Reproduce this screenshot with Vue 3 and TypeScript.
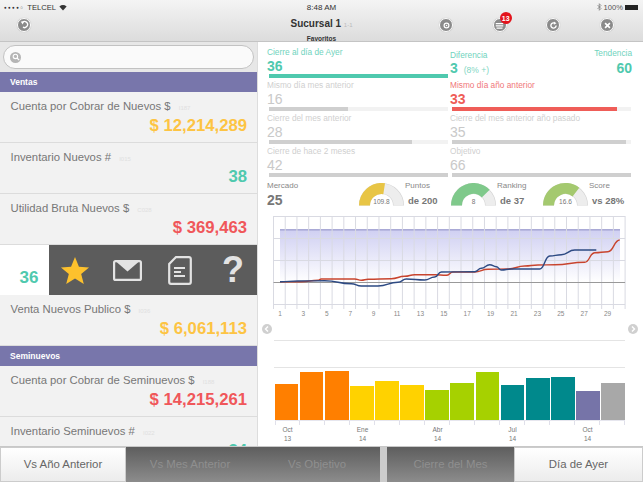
<script setup lang="ts">
interface Row { t: string; c: string; v: string; col: string }
const ventas1: Row[] = [
  { t: 'Cuenta por Cobrar de Nuevos $', c: 'I187', v: '$ 12,214,289', col: '#fdc443' },
  { t: 'Inventario Nuevos #', c: 'I015', v: '38', col: '#4fc9ae' },
  { t: 'Utilidad Bruta Nuevos $', c: 'C028', v: '$ 369,463', col: '#f0575a' },
]
const semi: Row[] = [
  { t: 'Cuenta por Cobrar de Seminuevos $', c: 'I188', v: '$ 14,215,261', col: '#f0575a' },
  { t: 'Inventario Seminuevos #', c: 'I022', v: '34', col: '#4fc9ae' },
]
const metrics = [
  { l: 'Mismo día mes anterior', v: '16', w: 44, kind: 'g' },
  { l: 'Mismo día año anterior', v: '33', w: 92, kind: 'r' },
  { l: 'Cierre del mes anterior', v: '28', w: 80, kind: 'g' },
  { l: 'Cierre del mes anterior año pasado', v: '35', w: 97, kind: 'g' },
  { l: 'Cierre de hace 2 meses', v: '42', w: 100, kind: 'g' },
  { l: 'Objetivo', v: '66', w: 100, kind: 'g' },
]
const gauges = [
  { name: 'Puntos', val: '109.8', of: 'de 200', col: '#e8c545', frac: 0.55 },
  { name: 'Ranking', val: '8', of: 'de 37', col: '#7fc98b', frac: 0.755 },
  { name: 'Score', val: '16.6', of: 'vs 28%', col: '#a4c96f', frac: 0.71 },
]
function arc(frac: number): string {
  const a = Math.PI * (1 - frac)
  const r = 17
  return `M5.5 22.5 A${r} ${r} 0 0 1 ${(22.5 + r * Math.cos(a)).toFixed(2)} ${(22.5 - r * Math.sin(a)).toFixed(2)}`
}
const bars = [
  { h: 36, c: '#ff7f00' }, { h: 48, c: '#ff7f00' }, { h: 49, c: '#ff7f00' }, { h: 34, c: '#ffd200' },
  { h: 39, c: '#ffd200' }, { h: 35, c: '#ffd200' }, { h: 30, c: '#a6d100' }, { h: 37, c: '#a6d100' },
  { h: 48, c: '#a6d100' }, { h: 35, c: '#00898c' }, { h: 42, c: '#00898c' }, { h: 43, c: '#00898c' },
  { h: 29, c: '#7674a8' }, { h: 37, c: '#a8a8a8' },
]
const barLabels = [
  { a: 'Oct', b: '13' }, { a: 'Ene', b: '14' }, { a: 'Abr', b: '14' }, { a: 'Jul', b: '14' }, { a: 'Oct', b: '14' },
]
const days = [1, 3, 5, 7, 9, 11, 13, 15, 17, 19, 21, 23, 25, 27, 29]
const vgrid = Array.from({ length: 31 }, (_, i) => 15.5 + i * 11.72)

// Points read from the reference at 3x, relative to the chart's corner.
function smooth(pts: number[][]): string {
  const p = pts.map(([x, y]) => [x / 3, y / 3 - 9])
  let d = `M${p[0][0].toFixed(1)} ${p[0][1].toFixed(1)}`
  for (let i = 1; i < p.length; i++) {
    const dx = (p[i][0] - p[i - 1][0]) / 2
    d += ` C${(p[i - 1][0] + dx).toFixed(1)} ${p[i - 1][1].toFixed(1)} ${(p[i][0] - dx).toFixed(1)} ${p[i][1].toFixed(1)} ${p[i][0].toFixed(1)} ${p[i][1].toFixed(1)}`
  }
  return d
}
const redLine = smooth([[66, 230], [130, 230], [180, 226], [190, 222], [290, 222], [310, 226], [330, 223], [400, 221], [440, 214], [470, 209], [530, 209], [565, 211], [585, 201], [650, 201], [690, 193], [750, 192], [800, 183], [840, 180], [890, 179], [980, 172], [1010, 143], [1050, 140], [1085, 105]])
const blueLine = smooth([[66, 230], [120, 228], [200, 227], [280, 236], [310, 243], [360, 243], [420, 232], [445, 222], [500, 225], [530, 216], [550, 201], [650, 200], [670, 190], [695, 179], [715, 185], [730, 195], [760, 192], [845, 192], [875, 153], [910, 149], [950, 135], [1015, 135]])
</script>

<template>
  <div class="app">
    <header class="top">
      <div class="status">
        <span class="carrier"><span class="dots">●●●●○</span> TELCEL
          <svg width="8" height="7" viewBox="0 0 11 9"><path d="M5.5 8.5 L0.5 3 Q5.5 -1 10.5 3 Z" fill="#333" /></svg>
        </span>
        <span class="clock">8:48 AM</span>
        <span class="right-status">
          <svg width="5" height="8" viewBox="0 0 5 8"><path d="M0.5 2 L4 5.5 L2.3 7.3 V0.7 L4 2.5 L0.5 6" fill="none" stroke="#777" stroke-width="0.7" /></svg>
          100%
          <span class="batt"></span>
        </span>
      </div>
      <div class="nav">
        <span class="round back"><svg width="12" height="12" viewBox="0 0 12 12"><path d="M3 3.5 A4 4 0 1 1 4 9.5" fill="none" stroke="#fff" stroke-width="1.8" /><path d="M1 2 L5.5 2 L3.5 6 Z" fill="#fff" /></svg></span>
        <div class="title">
          <div class="t1">Sucursal 1 <small>1-1</small></div>
          <div class="t2">Favoritos</div>
        </div>
        <div class="actions">
          <span class="round"><svg width="12" height="12" viewBox="0 0 12 12"><circle cx="6" cy="6" r="3.2" fill="none" stroke="#fff" stroke-width="1.6" /><circle cx="6" cy="6" r="1" fill="#fff" /></svg></span>
          <span class="round list">
            <svg width="12" height="12" viewBox="0 0 12 12"><path d="M1 3.5h10M1 6.5h10M2 9.5h8" stroke="#fff" stroke-width="1.6" /></svg>
            <span class="badge">13</span>
          </span>
          <span class="round"><svg width="12" height="12" viewBox="0 0 12 12"><path d="M9.5 6 A3.5 3.5 0 1 1 7.5 2.8" fill="none" stroke="#fff" stroke-width="1.8" /><path d="M6.5 0.8 L10 3 L6.5 5 Z" fill="#fff" /></svg></span>
          <span class="round"><svg width="12" height="12" viewBox="0 0 12 12"><path d="M2.8 2.8 L9.2 9.2 M9.2 2.8 L2.8 9.2" stroke="#fff" stroke-width="2.2" /></svg></span>
        </div>
      </div>
    </header>

    <div class="main">
      <aside class="side">
        <div class="searchwrap">
          <div class="search">
            <span class="mag"><svg width="8" height="8" viewBox="0 0 8 8"><circle cx="3.4" cy="3.4" r="2.2" fill="none" stroke="#fff" stroke-width="1.1" /><path d="M5 5 L7.2 7.2" stroke="#fff" stroke-width="1.2" /></svg></span>
          </div>
        </div>
        <div class="sec">Ventas</div>
        <div v-for="r in ventas1" :key="r.c" class="row">
          <div class="rt">{{ r.t }} <small>{{ r.c }}</small></div>
          <div class="rv" :style="{ color: r.col }">{{ r.v }}</div>
        </div>
        <div class="swipe">
          <div class="swipe-val"><span>36</span></div>
          <div class="swipe-btns">
            <svg class="star" width="30" height="29" viewBox="0 0 32 31"><path d="M16 1 L20.2 11.6 L31 12.2 L22.6 19.2 L25.4 30 L16 24 L6.6 30 L9.4 19.2 L1 12.2 L11.8 11.6 Z" fill="#fdc12d" /></svg>
            <svg class="env" width="29" height="21" viewBox="0 0 29 21"><rect x="1.1" y="1.1" width="26.8" height="18.8" rx="1.5" fill="none" stroke="#e3e3e3" stroke-width="2.2" /><path d="M3.5 2 L14.5 11.5 L25.5 2 Z" fill="#e3e3e3" /></svg>
            <svg class="doc" width="24" height="29" viewBox="0 0 24 29"><path d="M8 1.1 H21 a1.8 1.8 0 0 1 1.8 1.8 V26 a1.8 1.8 0 0 1 -1.8 1.8 H3 a1.8 1.8 0 0 1 -1.8 -1.8 V8 Z" fill="none" stroke="#e3e3e3" stroke-width="2.2" /><path d="M6 12h11M6 16h7M6 20h11" stroke="#e3e3e3" stroke-width="2" /></svg>
            <span class="q">?</span>
          </div>
        </div>
        <div class="row">
          <div class="rt">Venta Nuevos Publico $ <small>I036</small></div>
          <div class="rv yellow">$ 6,061,113</div>
        </div>
        <div class="sec">Seminuevos</div>
        <div v-for="r in semi" :key="r.c" class="row">
          <div class="rt">{{ r.t }} <small>{{ r.c }}</small></div>
          <div class="rv" :style="{ color: r.col }">{{ r.v }}</div>
        </div>
      </aside>

      <section class="detail">
        <div class="metrics">
          <div class="m">
            <div class="ml teal">Cierre al día de Ayer</div>
            <div class="mv teal2">36</div>
            <div class="bar"><i class="tealbar full"></i></div>
          </div>
          <div class="m diff">
            <div>
              <div class="ml teal dl">Diferencia</div>
              <div class="mv teal2 dv">3 <small>(8% +)</small></div>
            </div>
            <div class="tend">
              <div class="ml teal tl">Tendencia</div>
              <div class="mv teal2 tv">60</div>
            </div>
          </div>
          <div v-for="m in metrics" :key="m.l" class="m">
            <div class="ml" :class="{ red: m.kind === 'r' }">{{ m.l }}</div>
            <div class="mv" :class="{ red2: m.kind === 'r' }">{{ m.v }}</div>
            <div class="bar"><i :class="m.kind === 'r' ? 'redbar' : 'greybar'" :style="{ width: m.w + '%' }"></i></div>
          </div>
        </div>

        <div class="gauges">
          <div class="merc">
            <div class="gl">Mercado</div>
            <div class="gv">25</div>
          </div>
          <div v-for="g in gauges" :key="g.name" class="g">
            <svg class="gsvg" width="45" height="23" viewBox="0 0 45 23">
              <path d="M5.5 22.5 A17 17 0 0 1 39.5 22.5" fill="none" stroke="#d4d4d4" stroke-width="11" />
              <path d="M5.5 22.5 A17 17 0 0 1 39.5 22.5" fill="none" stroke="#ededed" stroke-width="9.8" />
              <path :d="arc(g.frac)" fill="none" :stroke="g.col" stroke-width="11" />
              <text x="22.5" y="21" text-anchor="middle" class="gtxt">{{ g.val }}</text>
            </svg>
            <div class="gside">
              <div class="gl">{{ g.name }}</div>
              <div class="gof">{{ g.of }}</div>
            </div>
          </div>
        </div>

        <div class="chart">
          <svg width="385" height="106" viewBox="0 0 385 106">
            <defs>
              <linearGradient id="band" x1="0" y1="0" x2="0" y2="1">
                <stop offset="0" stop-color="#cfcff2" />
                <stop offset="1" stop-color="#ffffff" />
              </linearGradient>
            </defs>
            <rect x="22" y="15.3" width="340" height="52.7" fill="url(#band)" />
            <rect x="22" y="15" width="340" height="1.6" fill="#aaaad6" />
            <line v-for="(x, i) in vgrid" :key="i" :x1="x" :x2="x" y1="2" y2="95" stroke="#d9dae2" stroke-width="1" />
            <path d="M15.5 2.5h351.6M15.5 24.5h351.6M15.5 46.5h351.6M15.5 90.5h351.6" stroke="#d9dae2" fill="none" />
            <path d="M15.5 68.5h351.6" stroke="#999" stroke-width="1" />
            <path :d="redLine" fill="none" stroke="#c8442e" stroke-width="1.4" />
            <path :d="blueLine" fill="none" stroke="#2d4a83" stroke-width="1.4" />
            <text v-for="(d, i) in days" :key="d" :x="22 + i * 23.4" y="102" text-anchor="middle" class="ax">{{ d }}</text>
          </svg>
        </div>
        <div class="arrows">
          <span class="arr"><svg width="10" height="10" viewBox="0 0 10 10"><path d="M6 2.5 L3.5 5 L6 7.5" fill="none" stroke="#fff" stroke-width="1.4" /></svg></span>
          <span class="arr"><svg width="10" height="10" viewBox="0 0 10 10"><path d="M4 2.5 L6.5 5 L4 7.5" fill="none" stroke="#fff" stroke-width="1.4" /></svg></span>
        </div>

        <div class="barsec">
          <div class="gridline one"></div>
          <div class="gridline two"></div>
          <div class="bars">
            <div v-for="(b, i) in bars" :key="i" class="bcol">
              <i :style="{ height: b.h + 'px', background: b.c }"></i>
            </div>
          </div>
          <div class="ticks">
            <span v-for="(b, i) in bars" :key="i"></span>
          </div>
          <div class="blabels">
            <div v-for="(l, i) in barLabels" :key="i" class="bl">
              <span>{{ l.a }}</span><span>{{ l.b }}</span>
            </div>
          </div>
        </div>
      </section>
    </div>

    <nav class="tabs">
      <div class="tab on a">Vs Año Anterior</div>
      <div class="tab off b">Vs Mes Anterior</div>
      <div class="tab off c">Vs Objetivo</div>
      <div class="sep"></div>
      <div class="tab off d">Cierre del Mes</div>
      <div class="tab on e">Día de Ayer</div>
    </nav>
  </div>
</template>

<style>
html, body { margin: 0; background: #fff; overflow: hidden; }
</style>

<style scoped>
.app { width: 643px; height: 482px; display: flex; flex-direction: column; font-family: "Liberation Sans", Arial, sans-serif; overflow: hidden; background: #fff; position: relative; }
.top { height: 42px; flex: none; box-sizing: border-box; background: linear-gradient(#f4f4f4, #dcdcdc); border-bottom: 1px solid #c4c4c4; display: flex; flex-direction: column; }
.status { height: 14px; display: flex; align-items: center; justify-content: space-between; padding: 0 5px 0 4px; font-size: 7.6px; color: #333; position: relative; }
.carrier { display: flex; align-items: center; gap: 3px; }
.dots { font-size: 4.4px; letter-spacing: 1.4px; }
.clock { position: absolute; left: 0; right: 0; text-align: center; font-size: 8px; }
.right-status { display: flex; align-items: center; gap: 2px; color: #555; }
.batt { width: 13px; height: 5px; background: #222; display: inline-block; }
.nav { flex: 1; display: flex; align-items: center; position: relative; padding: 0 0 6px 17px; }
.round { width: 12px; height: 12px; border-radius: 50%; background: #8a8a8a; border: 1px solid #fff; box-shadow: 0 0 1px #aaa; display: flex; align-items: center; justify-content: center; position: relative; }
.round svg { width: 9px; height: 9px; }
.title { position: absolute; left: 0; right: 0; top: 3px; text-align: center; color: #333; }
.t1 { font-size: 10px; font-weight: 700; line-height: 13px; }
.t1 small { font-size: 6px; font-weight: 400; color: #bbb; }
.t2 { font-size: 6.5px; font-weight: 700; line-height: 9px; margin-top: 2px; }
.actions { position: absolute; left: 439px; top: 4px; display: flex; gap: 39.7px; }
.badge { position: absolute; left: 6px; top: -7px; width: 12px; height: 12px; border-radius: 50%; background: #e3131c; color: #fff; font-size: 7px; font-weight: 700; display: flex; align-items: center; justify-content: center; }
.main { flex: 1; display: flex; min-height: 0; }
.side { width: 257px; flex: none; background: #f2f2f2; border-right: 1px solid #ddd; overflow: hidden; }
.searchwrap { height: 30px; box-sizing: border-box; padding: 3px; background: #e7e7e7; }
.search { height: 24px; box-sizing: border-box; border: 1px solid #c2c2c2; border-radius: 12px; background: #fafafa; display: flex; align-items: center; padding-left: 6px; }
.mag { width: 11px; height: 11px; border-radius: 50%; background: #b5b5b5; display: flex; align-items: center; justify-content: center; }
.sec { height: 20px; background: #7876ab; color: #fff; font-size: 8.5px; font-weight: 700; display: flex; align-items: center; padding-left: 10px; }
.row { height: 51px; box-sizing: border-box; border-bottom: 1px solid #dcdcdc; padding: 7px 9px 0 10.5px; position: relative; flex: none; }
.rt { font-size: 11.3px; color: #777; line-height: 14px; white-space: nowrap; }
.rt small { font-size: 6px; color: #e0e0e0; margin-left: 5px; }
.rv { position: absolute; right: 10px; top: 24.5px; font-size: 16.7px; font-weight: 700; line-height: 18px; }
.yellow { color: #fdc443; }
.swipe { height: 50px; display: flex; }
.swipe-val { width: 49px; background: #fff; display: flex; align-items: flex-end; justify-content: flex-end; padding: 0 10.5px 8px 0; box-sizing: border-box; color: #4fc9ae; font-size: 17px; font-weight: 700; line-height: 18px; }
.swipe-btns { flex: 1; background: #5c5c5c; display: flex; align-items: center; padding-left: 11px; }
.env { margin-left: 23px; }
.doc { margin-left: 26px; }
.q { color: #e3e3e3; font-size: 36px; font-weight: 700; line-height: 36px; margin-left: 30px; }
.detail { flex: 1; position: relative; min-width: 0; }
.metrics { display: grid; grid-template-columns: 183px 183px; padding: 3px 0 0 9px; }
.m { height: 33px; position: relative; }
.ml { font-size: 8.3px; color: #cfcfcf; line-height: 10px; padding-top: 2px; white-space: nowrap; }
.mv { font-size: 14px; color: #c9c9c9; line-height: 14px; margin-top: 2px; }
.bar { position: absolute; left: 2px; width: 179px; top: 29px; height: 4px; background: #f2f2f2; overflow: hidden; }
.bar i { display: block; height: 100%; }
.full { width: 100%; }
.teal { color: #6fd3bd; }
.teal2 { color: #4fc9ae; font-weight: 700; }
.mv.teal2 small { font-size: 8.5px; font-weight: 400; color: #7fd6c3; margin-left: 2px; }
.diff { display: flex; justify-content: space-between; padding-right: 1px; }
.dl { padding-top: 4.5px; }
.dv { margin-top: 1.5px; }
.tend { text-align: right; }
.tl { padding-top: 3px; }
.tv { margin-top: 3px; }
.tealbar { background: #4fc9ae; }
.greybar { background: #cfcfcf; }
.redbar { background: #ef5d58; }
.red { color: #f0777a; }
.red2 { color: #ef5d58; font-weight: 700; }
.gauges { height: 37px; display: flex; padding-left: 9px; }
.merc { width: 92px; }
.gl { font-size: 8px; color: #888; line-height: 10px; padding-top: 4px; }
.gv { font-size: 14px; font-weight: 700; color: #777; line-height: 14px; margin-top: 2px; }
.g { width: 92px; display: flex; height: 32px; }
.gsvg { margin-top: 6px; flex: none; }
.gtxt { font-size: 6.6px; fill: #777; font-family: "Liberation Sans", Arial, sans-serif; }
.gside { margin-left: 1px; white-space: nowrap; }
.gof { font-size: 9.5px; color: #777; font-weight: 700; line-height: 12px; margin-top: 4px; padding-left: 3px; }
.chart { height: 106px; }
.chart svg { display: block; }
.ax { font-size: 6.5px; fill: #888; font-family: "Liberation Sans", Arial, sans-serif; }
.arrows { height: 10px; display: flex; justify-content: space-between; padding: 0 5px 0 4px; margin-top: 4px; }
.arr { width: 10px; height: 10px; border-radius: 50%; background: #d0d0d0; }
.arr svg { display: block; }
.barsec { position: relative; padding: 27px 18px 0 16.5px; margin-top: 6px; }
.gridline { position: absolute; left: 16px; right: 18px; height: 1px; background: #e4e4e4; }
.gridline.one { top: 0; }
.gridline.two { top: 27px; }
.bars { height: 52.5px; display: flex; gap: 1.3px; align-items: flex-end; }
.bcol { flex: 1; display: flex; align-items: flex-end; height: 100%; }
.bcol i { display: block; width: 100%; }
.ticks { display: flex; height: 5px; border-top: 1px solid #e6e6ee; box-sizing: border-box; }
.ticks span { flex: 1; border-left: 1px solid #e0e0ea; }
.ticks span:last-child { border-right: 1px solid #e0e0ea; }
.blabels { display: flex; }
.bl { width: 75px; flex: none; display: flex; flex-direction: column; padding-left: 5px; box-sizing: border-box; font-size: 6.5px; color: #777; line-height: 9.5px; }
.bl span { width: 16px; text-align: center; }
.tabs { height: 36px; flex: none; display: flex; border-top: 1px solid #c8c8c8; box-sizing: border-box; position: relative; background: #fff; }
.tab { display: flex; align-items: center; justify-content: center; font-size: 11.4px; padding-bottom: 1px; box-sizing: border-box; }
.on { background: linear-gradient(#ffffff, #ececec); color: #666; }
.off { background: linear-gradient(#5e5e5e, #8c8c8c); color: #8f8f8f; }
.a { width: 126px; border: 1px solid #ccc; }
.b { width: 128px; }
.c { width: 126px; }
.sep { width: 7px; background: #ccc; }
.d { width: 127px; }
.e { flex: 1; border: 1px solid #ccc; }
</style>
